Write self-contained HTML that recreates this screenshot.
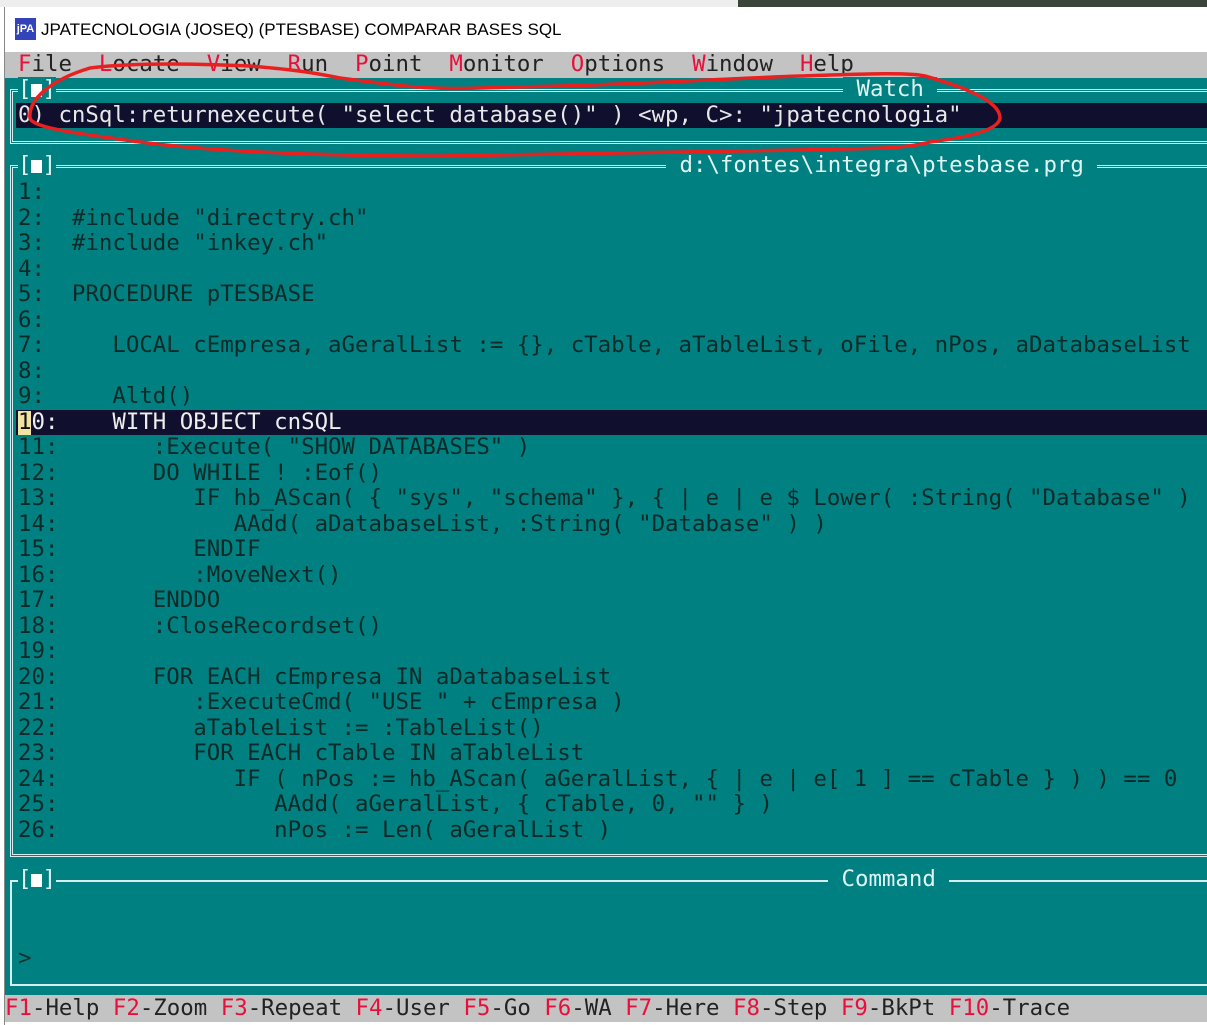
<!DOCTYPE html>
<html><head><meta charset="utf-8"><style>
*{margin:0;padding:0;box-sizing:border-box}
body{width:1207px;height:1025px;overflow:hidden;background:#fff;position:relative;font-family:"DejaVu Sans Mono","Liberation Mono",monospace}
.m{position:absolute;font-family:"DejaVu Sans Mono",monospace;font-size:22.4px;line-height:25.5px;white-space:pre;}
.r{color:#e8103a}
.box{position:absolute;border:3px double #d8eeee}
.lbl{position:absolute;background:#008080;color:#e0f4f4;font-size:22.4px;line-height:25px;white-space:pre;font-family:"DejaVu Sans Mono",monospace}
</style></head><body>
<div style="position:absolute;left:0;top:0;width:738px;height:7px;background:#eee"></div>
<div style="position:absolute;left:738px;top:0;width:469px;height:7px;background:#3a4438"></div>
<div style="position:absolute;left:4px;top:7px;width:1203px;height:1018px;border-left:1px solid #888;background:#fff"></div>
<div style="position:absolute;left:15px;top:18px;width:21px;height:22px;background:#3344bb;color:#fff;font:bold 11px 'Liberation Sans',sans-serif;line-height:22px;text-align:center">jPA</div>
<div style="position:absolute;left:41px;top:18px;font:17px 'Liberation Sans',sans-serif;line-height:24px;color:#000">JPATECNOLOGIA (JOSEQ) (PTESBASE) COMPARAR BASES SQL</div>
<div style="position:absolute;left:5px;top:52px;width:1202px;height:26px;background:#c3c3c3"></div>
<div class="m" style="left:18px;top:52px;color:#222"><span class="r">F</span>ile  <span class="r">L</span>ocate  <span class="r">V</span>iew  <span class="r">R</span>un  <span class="r">P</span>oint  <span class="r">M</span>onitor  <span class="r">O</span>ptions  <span class="r">W</span>indow  <span class="r">H</span>elp</div>
<div style="position:absolute;left:5px;top:78px;width:1202px;height:917px;background:#008080"></div>
<div style="position:absolute;left:5px;top:995px;width:1202px;height:27px;background:#c3c3c3"></div>
<div class="m" style="left:5px;top:996px;color:#222"><span class="r">F1</span>-Help <span class="r">F2</span>-Zoom <span class="r">F3</span>-Repeat <span class="r">F4</span>-User <span class="r">F5</span>-Go <span class="r">F6</span>-WA <span class="r">F7</span>-Here <span class="r">F8</span>-Step <span class="r">F9</span>-BkPt <span class="r">F10</span>-Trace</div>

<div class="box" style="left:10px;top:89px;width:1210px;height:55px"></div>
<div class="lbl" style="left:18px;top:77px">[<span style="display:inline-block;width:11px;height:13px;background:#fff;vertical-align:-1px"></span>]</div>
<div class="lbl" style="left:843px;top:77px"> Watch </div>
<div style="position:absolute;left:16px;top:103px;width:1191px;height:25px;background:#10102e"></div>
<div class="m" style="left:18px;top:103px;color:#e8e8e8">0) cnSql:returnexecute( "select database()" ) &lt;wp, C&gt;: "jpatecnologia"</div>

<div class="box" style="left:10px;top:165px;width:1210px;height:692px"></div>
<div class="lbl" style="left:18px;top:153px">[<span style="display:inline-block;width:11px;height:13px;background:#fff;vertical-align:-1px"></span>]</div>
<div class="lbl" style="left:666px;top:153px"> d:\fontes\integra\ptesbase.prg </div>
<div style="position:absolute;left:16px;top:410px;width:1191px;height:25px;background:#10102e"></div>
<div style="position:absolute;left:18px;top:411px;width:13px;height:24px;background:#f0e4a0"></div>
<div class="m" style="left:18px;top:180px;color:#0c2a28">1:
2:  #include "directry.ch"
3:  #include "inkey.ch"
4:
5:  PROCEDURE pTESBASE
6:
7:     LOCAL cEmpresa, aGeralList := {}, cTable, aTableList, oFile, nPos, aDatabaseList
8:
9:     Altd()
<span style="color:#111">1</span><span style="color:#eee">0:    WITH OBJECT cnSQL</span>
11:       :Execute( "SHOW DATABASES" )
12:       DO WHILE ! :Eof()
13:          IF hb_AScan( { "sys", "schema" }, { | e | e $ Lower( :String( "Database" ) )
14:             AAdd( aDatabaseList, :String( "Database" ) )
15:          ENDIF
16:          :MoveNext()
17:       ENDDO
18:       :CloseRecordset()
19:
20:       FOR EACH cEmpresa IN aDatabaseList
21:          :ExecuteCmd( "USE " + cEmpresa )
22:          aTableList := :TableList()
23:          FOR EACH cTable IN aTableList
24:             IF ( nPos := hb_AScan( aGeralList, { | e | e[ 1 ] == cTable } ) ) == 0
25:                AAdd( aGeralList, { cTable, 0, "" } )
26:                nPos := Len( aGeralList )</div>

<div style="position:absolute;left:10px;top:880px;width:1210px;height:106px;border:2px solid #d8eeee"></div>
<div class="lbl" style="left:18px;top:867px">[<span style="display:inline-block;width:11px;height:13px;background:#fff;vertical-align:-1px"></span>]</div>
<div class="lbl" style="left:828px;top:867px"> Command </div>
<div class="m" style="left:18px;top:946px;color:#10302e">&gt;</div>

<svg style="position:absolute;left:0;top:0" width="1207" height="1025">
<path d="M90,68 C140,62 200,64 250,66 C300,70 320,74 340,78 C400,86 430,90 480,88 L560,86 C640,84 740,78 800,76 C860,74 910,72 925,76 C960,86 1000,100 1000,118 C998,132 960,138 930,142 C900,150 860,148 800,150 L440,156 C300,156 200,150 140,142 C80,134 32,128 30,118 C28,100 50,80 90,68 Z" fill="none" stroke="#e82020" stroke-width="3.5"/>
</svg>
</body></html>
